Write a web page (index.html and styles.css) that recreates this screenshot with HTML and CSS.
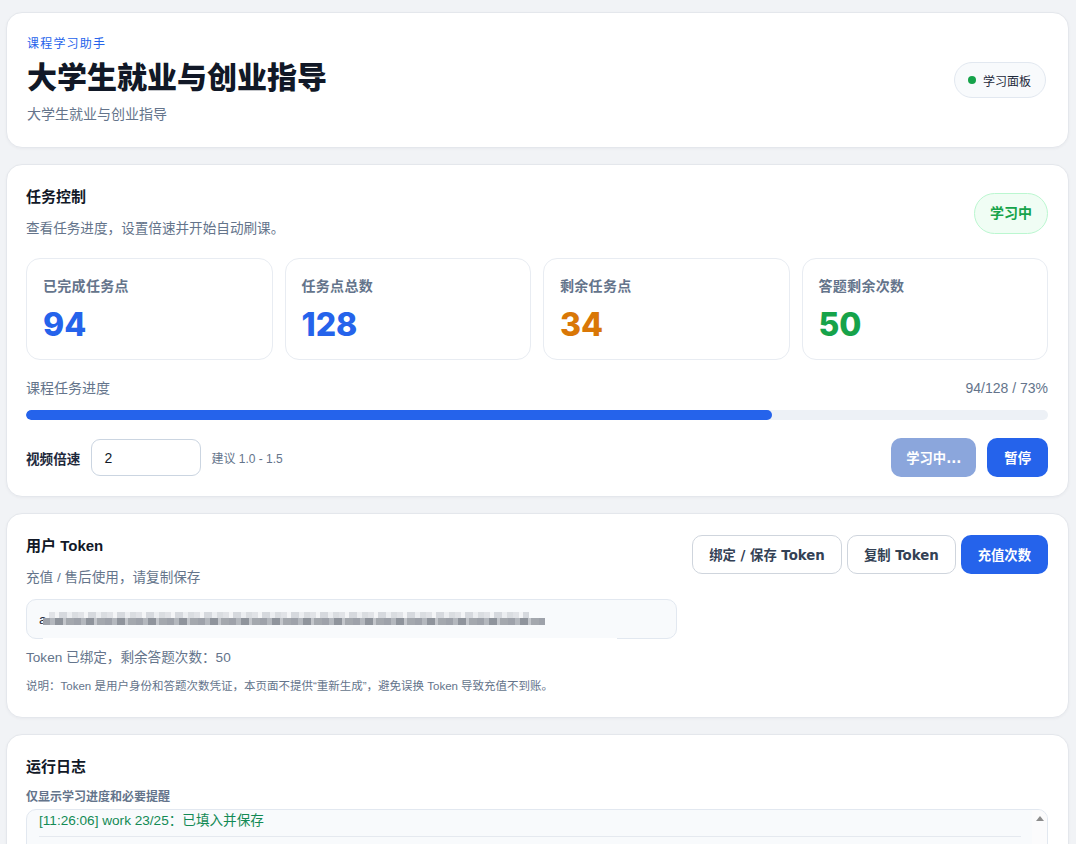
FILE: index.html
```html
<!DOCTYPE html>
<html lang="zh-CN">
<head>
    <meta charset="UTF-8">
    <meta name="viewport" content="width=device-width, initial-scale=1.0">
    <title>大学生就业与创业指导 - 课程学习助手</title>
    <link rel="stylesheet" href="styles.css">
</head>
<body>
    <div class="page">
        <header class="card hero">
            <div class="hero-text">
                <div class="eyebrow">课程学习助手</div>
                <h1>大学生就业与创业指导</h1>
                <p class="hero-sub">大学生就业与创业指导</p>
            </div>
            <div class="panel-pill"><span class="dot"></span>学习面板</div>
        </header>

        <section class="card">
            <div class="card-head">
                <div>
                    <h2>任务控制</h2>
                    <p class="muted">查看任务进度，设置倍速并开始自动刷课。</p>
                </div>
                <span class="state-badge">学习中</span>
            </div>

            <div class="stats">
                <div class="stat">
                    <div class="stat-label">已完成任务点</div>
                    <div class="stat-value blue">94</div>
                </div>
                <div class="stat">
                    <div class="stat-label">任务点总数</div>
                    <div class="stat-value blue">128</div>
                </div>
                <div class="stat">
                    <div class="stat-label">剩余任务点</div>
                    <div class="stat-value orange">34</div>
                </div>
                <div class="stat">
                    <div class="stat-label">答题剩余次数</div>
                    <div class="stat-value green">50</div>
                </div>
            </div>

            <div class="progress-head">
                <span>课程任务进度</span>
                <span>94/128 / 73%</span>
            </div>
            <div class="progress-track">
                <div class="progress-fill" style="width: 73%"></div>
            </div>

            <div class="controls">
                <label class="speed-label" for="speed">视频倍速</label>
                <input id="speed" class="speed-input" type="text" value="2">
                <span class="hint">建议 1.0 - 1.5</span>
                <div class="actions">
                    <button class="btn btn-primary" disabled>学习中...</button>
                    <button class="btn btn-primary">暂停</button>
                </div>
            </div>
        </section>

        <section class="card token-card">
            <div class="token-main">
                <h2>用户 Token</h2>
                <p class="muted">充值 / 售后使用，请复制保存</p>
                <div class="token-field">
                    <span>a</span>
                    <div class="mosaic"></div>
                </div>
                <p class="token-status">Token 已绑定，剩余答题次数：50</p>
                <p class="note">说明：Token 是用户身份和答题次数凭证，本页面不提供“重新生成”，避免误换 Token 导致充值不到账。</p>
            </div>
            <div class="token-actions">
                <button class="btn btn-outline">绑定 / 保存 Token</button>
                <button class="btn btn-outline">复制 Token</button>
                <button class="btn btn-primary">充值次数</button>
            </div>
        </section>

        <section class="card">
            <h2 class="log-title">运行日志</h2>
            <p class="log-sub">仅显示学习进度和必要提醒</p>
            <div class="log-wrap">
                <div class="log" id="log"></div>
                <div class="log-scrollbar"><span class="arrow-up"></span></div>
            </div>
        </section>
    </div>

    <script>
        // newest entry first
        const entries = [
            '[11:26:06] work 23/25：已填入并保存'
        ];

        const log = document.getElementById('log');
        entries.forEach(text => {
            const row = document.createElement('div');
            row.className = 'log-entry';
            row.textContent = text;
            log.appendChild(row);
        });
    </script>
</body>
</html>
```

FILE: styles.css
```css
body {
    margin: 0;
    background-color: #f1f3f6;
    color: #0f172a;
    font-family: "Liberation Sans", "Noto Sans CJK SC", sans-serif;
}
h1, h2, p {
    margin: 0;
}
.page {
    display: flex;
    flex-direction: column;
    gap: 16px;
    padding: 12px 7px 12px 6px;
}
.card {
    background-color: #ffffff;
    border: 1px solid #e4e7ec;
    border-radius: 16px;
    box-shadow: 0 1px 3px rgba(15, 23, 42, 0.04);
    padding: 21px 20px 19px 19px;
}

/* top banner */
.hero {
    display: flex;
    align-items: center;
    justify-content: space-between;
    padding: 22px 22px 24px 20px;
}
.eyebrow {
    font-size: 12px;
    line-height: 18px;
    letter-spacing: 0.1em;
    color: #2563eb;
}
.hero h1 {
    margin-top: 6px;
    font-size: 30px;
    line-height: 38px;
    font-weight: 900;
    color: #111827;
}
.hero-sub {
    margin-top: 8px;
    font-size: 14px;
    line-height: 18px;
    color: #64748b;
}
.panel-pill {
    display: flex;
    align-items: center;
    gap: 7px;
    height: 34px;
    padding: 0 14px 0 13px;
    border: 1px solid #e2e8f0;
    border-radius: 999px;
    background-color: #f8fafc;
    font-size: 12px;
    color: #1e293b;
    margin-top: 2px;
}
.dot {
    width: 8px;
    height: 8px;
    border-radius: 50%;
    background-color: #16a34a;
}

/* task control */
h2 {
    font-size: 15px;
    line-height: 22px;
    font-weight: 700;
    color: #111827;
}
.muted {
    margin-top: 10px;
    font-size: 13.6px;
    line-height: 22px;
    color: #64748b;
}
.card-head {
    display: flex;
    align-items: center;
    justify-content: space-between;
}
.state-badge {
    padding: 10px 15px;
    border: 1px solid #bbf7d0;
    border-radius: 999px;
    background-color: #f0fdf4;
    color: #16a34a;
    font-size: 14px;
    line-height: 19px;
    font-weight: 700;
}
.stats {
    display: grid;
    grid-template-columns: repeat(4, 1fr);
    gap: 12px;
    margin-top: 18px;
}
.stat {
    border: 1px solid #e8ecf2;
    border-radius: 14px;
    padding: 17px 16px 15px;
}
.stat-label {
    font-size: 14px;
    line-height: 20px;
    letter-spacing: 0.3px;
    font-weight: 700;
    color: #64748b;
}
.stat-value {
    margin-top: 10px;
    font-family: Inter, "Liberation Sans", sans-serif;
    font-size: 32px;
    line-height: 38px;
    font-weight: 800;
}
.blue { color: #2563eb; }
.orange { color: #d97706; }
.green { color: #16a34a; }

.progress-head {
    display: flex;
    justify-content: space-between;
    margin-top: 18px;
    font-size: 14px;
    line-height: 20px;
    color: #64748b;
}
.progress-track {
    margin-top: 12px;
    height: 10px;
    border-radius: 5px;
    background-color: #edf1f6;
    overflow: hidden;
}
.progress-fill {
    height: 100%;
    border-radius: 5px;
    background-color: #2563eb;
}
.controls {
    display: flex;
    align-items: center;
    margin-top: 18px;
}
.speed-label {
    font-size: 13.6px;
    font-weight: 700;
    color: #1e293b;
}
.speed-input {
    box-sizing: border-box;
    width: 110px;
    height: 37px;
    margin-left: 11px;
    padding: 0 12px;
    border: 1px solid #cbd5e1;
    border-radius: 9px;
    font-family: "Liberation Sans", sans-serif;
    font-size: 14px;
    color: #111827;
}
.hint {
    margin-left: 10px;
    font-size: 12px;
    color: #64748b;
}
.actions {
    display: flex;
    gap: 11px;
    margin-left: auto;
}

.btn {
    height: 39px;
    padding: 0 16px;
    border: 1px solid transparent;
    border-radius: 10px;
    font-family: "DejaVu Sans", "Noto Sans CJK SC", sans-serif;
    font-size: 13.33px;
    font-weight: 700;
    cursor: pointer;
}
.btn-primary {
    background-color: #2563eb;
    color: #ffffff;
}
.btn-primary:disabled {
    padding: 0 14px;
    background-color: #8ba6dc;
    cursor: default;
}
.btn-outline {
    background-color: #ffffff;
    border-color: #cfd5dd;
    color: #334155;
}

/* token */
.token-card {
    display: flex;
    align-items: flex-start;
    gap: 15px;
    padding-bottom: 22px;
}
.token-main {
    flex: 1;
}
.token-actions {
    display: flex;
    gap: 5px;
}
.token-field {
    position: relative;
    box-sizing: border-box;
    display: flex;
    align-items: center;
    height: 40px;
    margin-top: 10px;
    padding: 0 12px;
    border: 1px solid #e2e8f0;
    border-radius: 10px;
    background-color: #f8fafc;
    font-size: 13.6px;
    color: #1e293b;
}
/* masked token value */
.mosaic {
    position: absolute;
    left: 16px;
    top: 11px;
    width: 574px;
    height: 36px;
    background:
        linear-gradient(#ffffff, #ffffff) 0 27px / 574px 8px no-repeat,
        repeating-linear-gradient(90deg, #9ea2aa 0 7px, #b4b8be 7px 12px, #8f949c 12px 20px, #c3c6cb 20px 23px, #a4a8ae 23px 31px) 0 7px / 502px 7px no-repeat,
        repeating-linear-gradient(90deg, #e1e3e7 0 6px, #f4f5f7 6px 10px, #d6d9de 10px 18px, #eceef1 18px 23px, #dadde1 23px 29px) 6px 1px / 480px 6px no-repeat;
}
.token-status {
    margin-top: 8px;
    font-size: 13.6px;
    line-height: 22px;
    color: #64748b;
}
.note {
    margin-top: 8px;
    font-size: 11.5px;
    line-height: 18px;
    color: #64748b;
}

/* log */
.log-title {
    line-height: 20px;
    margin-top: 1px;
}
.log-sub {
    margin-top: 11px;
    font-size: 12px;
    line-height: 18px;
    font-weight: 700;
    color: #64748b;
}
.log-wrap {
    position: relative;
    margin-top: 3px;
}
.log {
    height: 220px;
    padding: 0 26px 0 12px;
    border: 1px solid #e2e8f0;
    border-radius: 10px;
    background-color: #f8fafc;
}
.log-entry {
    padding: 1px 0 5px;
    border-bottom: 1px solid #e5e9ef;
    font-size: 13.6px;
    line-height: 20px;
    color: #138a55;
}
.log-scrollbar {
    position: absolute;
    top: 1px;
    right: 1px;
    bottom: 1px;
    width: 15px;
    display: flex;
    justify-content: center;
    background-color: #fbfbfc;
    border-top-right-radius: 9px;
}
.arrow-up {
    margin-top: 6px;
    width: 0;
    height: 0;
    border-left: 4px solid transparent;
    border-right: 4px solid transparent;
    border-bottom: 5px solid #8c8c8c;
}
```
